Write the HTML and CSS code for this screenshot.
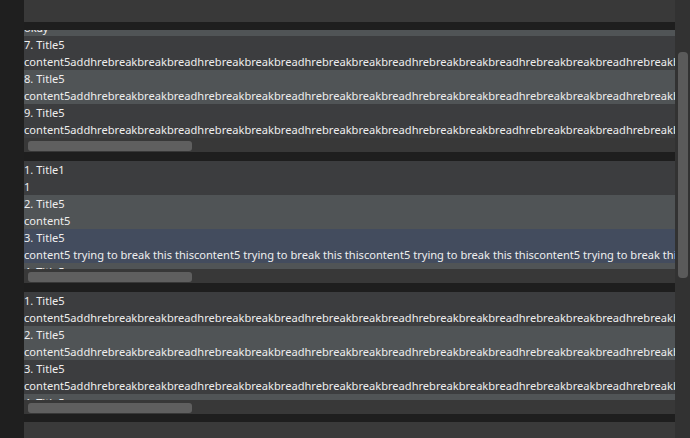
FILE: index.html
```html
<!DOCTYPE html>
<html>
<head>
<meta charset="utf-8">
<link rel="stylesheet" href="styles.css">
</head>
<body>
<div class="app">
  <div class="rail"></div>
  <div class="main">
    <div class="spacer-top"></div>
    <div class="stack">
      <section class="list">
        <div class="viewport">
          <div class="rows scrolled-first">
            <div class="row alt"><div class="title">6. Title5</div><div class="content">okay</div></div>
            <div class="row"><div class="title">7. Title5</div><div class="content">content5addhrebreakbreakbreadhrebreakbreakbreadhrebreakbreakbreadhrebreakbreakbreadhrebreakbreakbreadhrebreakbreakbreadhrebreakbreakbreadhrebreakbreakbread</div></div>
            <div class="row alt"><div class="title">8. Title5</div><div class="content">content5addhrebreakbreakbreadhrebreakbreakbreadhrebreakbreakbreadhrebreakbreakbreadhrebreakbreakbreadhrebreakbreakbreadhrebreakbreakbreadhrebreakbreakbread</div></div>
            <div class="row"><div class="title">9. Title5</div><div class="content">content5addhrebreakbreakbreadhrebreakbreakbreadhrebreakbreakbreadhrebreakbreakbreadhrebreakbreakbreadhrebreakbreakbreadhrebreakbreakbreadhrebreakbreakbread</div></div>
          </div>
        </div>
        <div class="hscroll"><div class="hthumb"></div></div>
      </section>
      <section class="list">
        <div class="viewport">
          <div class="rows">
            <div class="row"><div class="title">1. Title1</div><div class="content">1</div></div>
            <div class="row alt"><div class="title">2. Title5</div><div class="content">content5</div></div>
            <div class="row selected"><div class="title">3. Title5</div><div class="content">content5 trying to break this thiscontent5 trying to break this thiscontent5 trying to break this thiscontent5 trying to break this thiscontent5 trying to break this this</div></div>
            <div class="row alt"><div class="title">4. Title5</div><div class="content">content5</div></div>
          </div>
        </div>
        <div class="hscroll"><div class="hthumb"></div></div>
      </section>
      <section class="list">
        <div class="viewport">
          <div class="rows">
            <div class="row"><div class="title">1. Title5</div><div class="content">content5addhrebreakbreakbreadhrebreakbreakbreadhrebreakbreakbreadhrebreakbreakbreadhrebreakbreakbreadhrebreakbreakbreadhrebreakbreakbreadhrebreakbreakbread</div></div>
            <div class="row alt"><div class="title">2. Title5</div><div class="content">content5addhrebreakbreakbreadhrebreakbreakbreadhrebreakbreakbreadhrebreakbreakbreadhrebreakbreakbreadhrebreakbreakbreadhrebreakbreakbreadhrebreakbreakbread</div></div>
            <div class="row"><div class="title">3. Title5</div><div class="content">content5addhrebreakbreakbreadhrebreakbreakbreadhrebreakbreakbreadhrebreakbreakbreadhrebreakbreakbreadhrebreakbreakbreadhrebreakbreakbreadhrebreakbreakbread</div></div>
            <div class="row alt"><div class="title">4. Title5</div><div class="content">content5addhrebreakbreakbreadhrebreakbreakbread</div></div>
          </div>
        </div>
        <div class="hscroll"><div class="hthumb"></div></div>
      </section>
    </div>
  </div>
  <div class="vscroll"><div class="vthumb"></div></div>
</div>
</body>
</html>
```
FILE: styles.css
```css
* { box-sizing: border-box; }
html, body { margin: 0; padding: 0; }
body {
  width: 690px;
  height: 438px;
  overflow: hidden;
  background: #3a3a3a;
  font-family: "Noto Sans", "Open Sans", sans-serif;
  font-size: 11.1px;
  color: #eeeeee;
}
.app {
  display: flex;
  height: 438px;
}
.rail {
  width: 24px;
  flex: none;
  background: #1f1f1f;
}
.main {
  width: 651px;
  flex: none;
  display: flex;
  flex-direction: column;
  background: #3a3a3a;
  overflow: hidden;
}
.spacer-top {
  height: 22px;
  flex: none;
  background: #393939;
}
.stack {
  display: flex;
  flex-direction: column;
  gap: 9px;
  padding: 8px 0;
  background: #1e1e1e;
}
.list {
  height: 122px;
  display: flex;
  flex-direction: column;
  background: #383838;
}
.viewport {
  height: 108px;
  flex: none;
  overflow: hidden;
}
.scrolled-first { margin-top: -28px; }
.row {
  background: #3c3d3f;
  white-space: nowrap;
}
.row.alt { background: #505456; }
.row.selected { background: #434c5e; }
.title, .content {
  height: 17px;
  line-height: 17px;
  overflow: hidden;
}
.hscroll {
  flex: 1;
  padding: 3px 4px 0;
  background: #383838;
}
.hthumb {
  width: 164px;
  height: 10px;
  border-radius: 3px;
  background: #5f5f5f;
}
.vscroll {
  width: 15px;
  flex: none;
  background: #323232;
  padding: 52px 2px 0 3px;
}
.vthumb {
  height: 226px;
  border-radius: 4px;
  background: #5a5a5a;
}
```
